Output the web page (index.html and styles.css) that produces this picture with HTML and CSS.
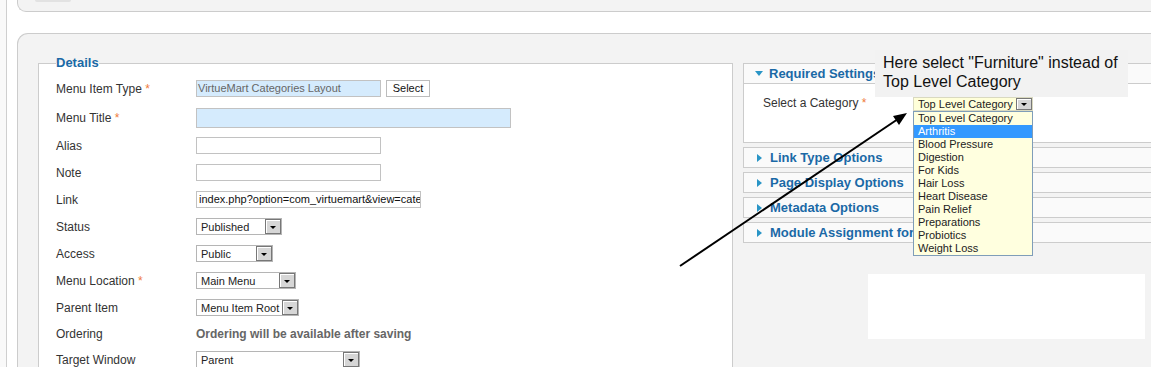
FILE: index.html
```html
<!DOCTYPE html>
<html>
<head>
<meta charset="utf-8">
<title>Menu Item</title>
<link rel="stylesheet" href="styles.css">
</head>
<body>
<div class="page">
  <div class="toolbar"><div class="toolbar-btn"></div></div>
  <div class="main">
    <fieldset class="details">
      <legend>Details</legend>
      <div class="row">
        <div class="lbl">Menu Item Type <span class="req">*</span></div>
        <div class="field">
          <div class="inp readonly w185">VirtueMart Categories Layout</div>
          <div class="btn">Select</div>
        </div>
      </div>
      <div class="row tall">
        <div class="lbl">Menu Title <span class="req">*</span></div>
        <div class="field"><div class="inp readonly w315 h20"></div></div>
      </div>
      <div class="row">
        <div class="lbl">Alias</div>
        <div class="field"><div class="inp w185"></div></div>
      </div>
      <div class="row">
        <div class="lbl">Note</div>
        <div class="field"><div class="inp w185"></div></div>
      </div>
      <div class="row">
        <div class="lbl">Link</div>
        <div class="field"><div class="inp w225 dark">index.php?option=com_virtuemart&amp;view=categ</div></div>
      </div>
      <div class="row">
        <div class="lbl">Status</div>
        <div class="field"><div class="select w86"><span class="txt">Published</span><span class="sel-btn"></span></div></div>
      </div>
      <div class="row">
        <div class="lbl">Access</div>
        <div class="field"><div class="select w77"><span class="txt">Public</span><span class="sel-btn"></span></div></div>
      </div>
      <div class="row">
        <div class="lbl">Menu Location <span class="req">*</span></div>
        <div class="field"><div class="select w100"><span class="txt">Main Menu</span><span class="sel-btn"></span></div></div>
      </div>
      <div class="row">
        <div class="lbl">Parent Item</div>
        <div class="field"><div class="select w103"><span class="txt">Menu Item Root</span><span class="sel-btn"></span></div></div>
      </div>
      <div class="row short">
        <div class="lbl">Ordering</div>
        <div class="field"><span class="info">Ordering will be available after saving</span></div>
      </div>
      <div class="row">
        <div class="lbl">Target Window</div>
        <div class="field"><div class="select w164"><span class="txt">Parent</span><span class="sel-btn"></span></div></div>
      </div>
    </fieldset>

    <div class="side">
      <div class="panel">
        <div class="panel-head"><span class="tri down"></span>Required Settings</div>
        <div class="panel-body">
          <div class="lbl side-lbl">Select a Category <span class="req">*</span></div>
          <div class="cat-wrap">
            <div class="select cat"><span class="txt">Top Level Category</span><span class="sel-btn"></span></div>
            <ul class="dropdown">
              <li>Top Level Category</li>
              <li class="hl">Arthritis</li>
              <li>Blood Pressure</li>
              <li>Digestion</li>
              <li>For Kids</li>
              <li>Hair Loss</li>
              <li>Heart Disease</li>
              <li>Pain Relief</li>
              <li>Preparations</li>
              <li>Probiotics</li>
              <li>Weight Loss</li>
            </ul>
          </div>
        </div>
      </div>
      <div class="panel"><div class="panel-head"><span class="tri right"></span>Link Type Options</div></div>
      <div class="panel"><div class="panel-head"><span class="tri right"></span>Page Display Options</div></div>
      <div class="panel"><div class="panel-head"><span class="tri right"></span>Metadata Options</div></div>
      <div class="panel"><div class="panel-head"><span class="tri right"></span><span class="clip">Module Assignment for</span></div></div>
      <div class="blank"></div>
    </div>
  </div>

  <div class="note">Here select "Furniture" instead of<br>Top Level Category</div>
  <svg class="arrow" width="1151" height="367" viewBox="0 0 1151 367">
    <line x1="680" y1="266" x2="898" y2="119" stroke="#000" stroke-width="2"/>
    <polygon points="907,113 893,116 899,125" fill="#000"/>
  </svg>
</div>
</body>
</html>
```

FILE: styles.css
```css
html, body {
  margin: 0;
  padding: 0;
  overflow: hidden;
}
body {
  background: #f9f9f9;
  font-family: "Liberation Sans", Arial, sans-serif;
  font-size: 12px;
  color: #333;
}
.page {
  position: relative;
  width: 1151px;
  height: 367px;
  margin-left: 6px;
  border-left: 1px solid #cfcfcf;
  background: #fff;
  padding-left: 10px;
  box-sizing: border-box;
  overflow: hidden;
}
.toolbar {
  height: 12px;
  background: #f3f3f3;
  border-left: 1px solid #ccc;
  border-bottom: 1px solid #ccc;
  border-bottom-left-radius: 9px;
  box-sizing: border-box;
  padding-left: 17px;
  width: 1200px;
}
.toolbar-btn {
  width: 36px;
  height: 2px;
  background: #e2e2e2;
  border-radius: 0 0 6px 6px;
}
.main {
  margin-top: 21px;
  width: 1200px;
  height: 400px;
  background: #f3f3f3;
  border-top: 1px solid #ccc;
  border-left: 1px solid #ccc;
  border-top-left-radius: 11px;
  box-sizing: border-box;
  display: flex;
  align-items: flex-start;
  gap: 10px;
  padding: 21px 0 0 20px;
}
.details {
  width: 695px;
  box-sizing: border-box;
  margin: 0;
  padding: 4px 0 0 17px;
  border: 1px solid #ccc;
  background: #fff;
  min-height: 360px;
}
.details legend {
  font-size: 13px;
  font-weight: bold;
  color: #1a69a6;
  padding: 0;
  margin-left: 0;
  line-height: 16px;
}
.row {
  display: flex;
  align-items: center;
  height: 27px;
}
.row.tall { height: 30px; padding-top: 2px; box-sizing: border-box; }
.row.short { height: 25px; }
.lbl {
  width: 140px;
  flex: none;
  color: #333;
}
.req { color: #ef7b3b; }
.field {
  display: flex;
  align-items: center;
  gap: 5px;
}
.inp {
  height: 17px;
  box-sizing: border-box;
  border: 1px solid #c2c2c2;
  background: #fff;
  font-size: 11px;
  line-height: 15px;
  padding-left: 1px;
  white-space: nowrap;
  overflow: hidden;
  color: #666;
}
.inp.readonly { background: #d5ebfd; }
.inp.dark { color: #111; padding-left: 2px; }
.h20 { height: 20px; }
.w185 { width: 185px; }
.w315 { width: 315px; }
.w225 { width: 225px; }
.w86 { width: 86px; }
.w77 { width: 77px; }
.w100 { width: 100px; }
.w103 { width: 103px; }
.w164 { width: 164px; }
.btn {
  height: 17px;
  width: 44px;
  box-sizing: border-box;
  border: 1px solid #bcbcbc;
  background: #fff;
  font-size: 11px;
  line-height: 15px;
  text-align: center;
  color: #111;
}
.select {
  display: flex;
  align-items: center;
  height: 17px;
  box-sizing: border-box;
  border: 1px solid #b5b5b5;
  background: #fff;
  font-size: 11px;
  color: #222;
  padding: 0 0 0 4px;
}
.select .txt {
  flex: 1;
  white-space: nowrap;
  overflow: hidden;
}
.sel-btn {
  flex: none;
  position: relative;
  width: 16px;
  height: 15px;
  box-sizing: border-box;
  border: 1px solid #777;
  box-shadow: inset 1px 1px 0 #fff;
  background: #d6d6d6;
}
.sel-btn::after {
  content: "";
  position: absolute;
  left: 4px;
  top: 6px;
  border-left: 3px solid transparent;
  border-right: 3px solid transparent;
  border-top: 3px solid #000;
}
.info {
  font-weight: bold;
  color: #666;
}
.side {
  width: 440px;
  flex: none;
  margin-top: 8px;
  display: flex;
  flex-direction: column;
  gap: 4px;
}
.panel {
  border: 1px solid #ccc;
  background: #fafafa;
}
.panel-head {
  height: 19px;
  display: flex;
  align-items: center;
  font-size: 13px;
  font-weight: bold;
  color: #1a69a6;
  padding-left: 11px;
  white-space: nowrap;
}
.clip { display: inline-block; }
.tri {
  width: 0;
  height: 0;
  margin-right: 8px;
}
.tri.down {
  border-left: 4px solid transparent;
  border-right: 4px solid transparent;
  border-top: 5px solid #2a95c6;
  margin-right: 6px;
}
.tri.right {
  margin-left: 2px;
  border-top: 4px solid transparent;
  border-bottom: 4px solid transparent;
  border-left: 5px solid #2a95c6;
}
.panel-body {
  height: 59px;
  border-top: 1px solid #ccc;
  background: #fff;
  display: flex;
  align-items: flex-start;
  padding: 13px 0 0 19px;
  box-sizing: border-box;
}
.side-lbl { width: 150px; margin-top: -1px; }
.cat-wrap {
  position: relative;
  margin-top: 0;
}
.select.cat {
  width: 120px;
  height: 14px;
  background: #ffffd9;
  border: 1px solid #d9d9c0;
  padding-left: 4px;
}
.select.cat .sel-btn { height: 12px; width: 16px; }
.select.cat .sel-btn::after { top: 4px; }
.dropdown {
  position: absolute;
  left: 0;
  top: 14px;
  width: 120px;
  margin: 0;
  padding: 0;
  list-style: none;
  background: #ffffdf;
  border: 1px solid #7f9db9;
  box-sizing: border-box;
  font-size: 11px;
  color: #222;
  z-index: 2;
}
.dropdown li {
  height: 13px;
  line-height: 13px;
  padding-left: 4px;
  white-space: nowrap;
}
.dropdown li.hl {
  background: #3399ff;
  color: #fff;
}
.blank {
  margin: 27px 0 0 125px;
  width: 277px;
  height: 65px;
  background: #fff;
}
.note {
  position: absolute;
  left: 868px;
  top: 50px;
  width: 253px;
  height: 47px;
  box-sizing: border-box;
  background: #f2f2f2;
  padding: 3px 0 0 8px;
  font-size: 16px;
  line-height: 19px;
  color: #111;
  z-index: 3;
}
.arrow {
  position: absolute;
  left: -7px;
  top: 0;
  z-index: 4;
  pointer-events: none;
}
```
